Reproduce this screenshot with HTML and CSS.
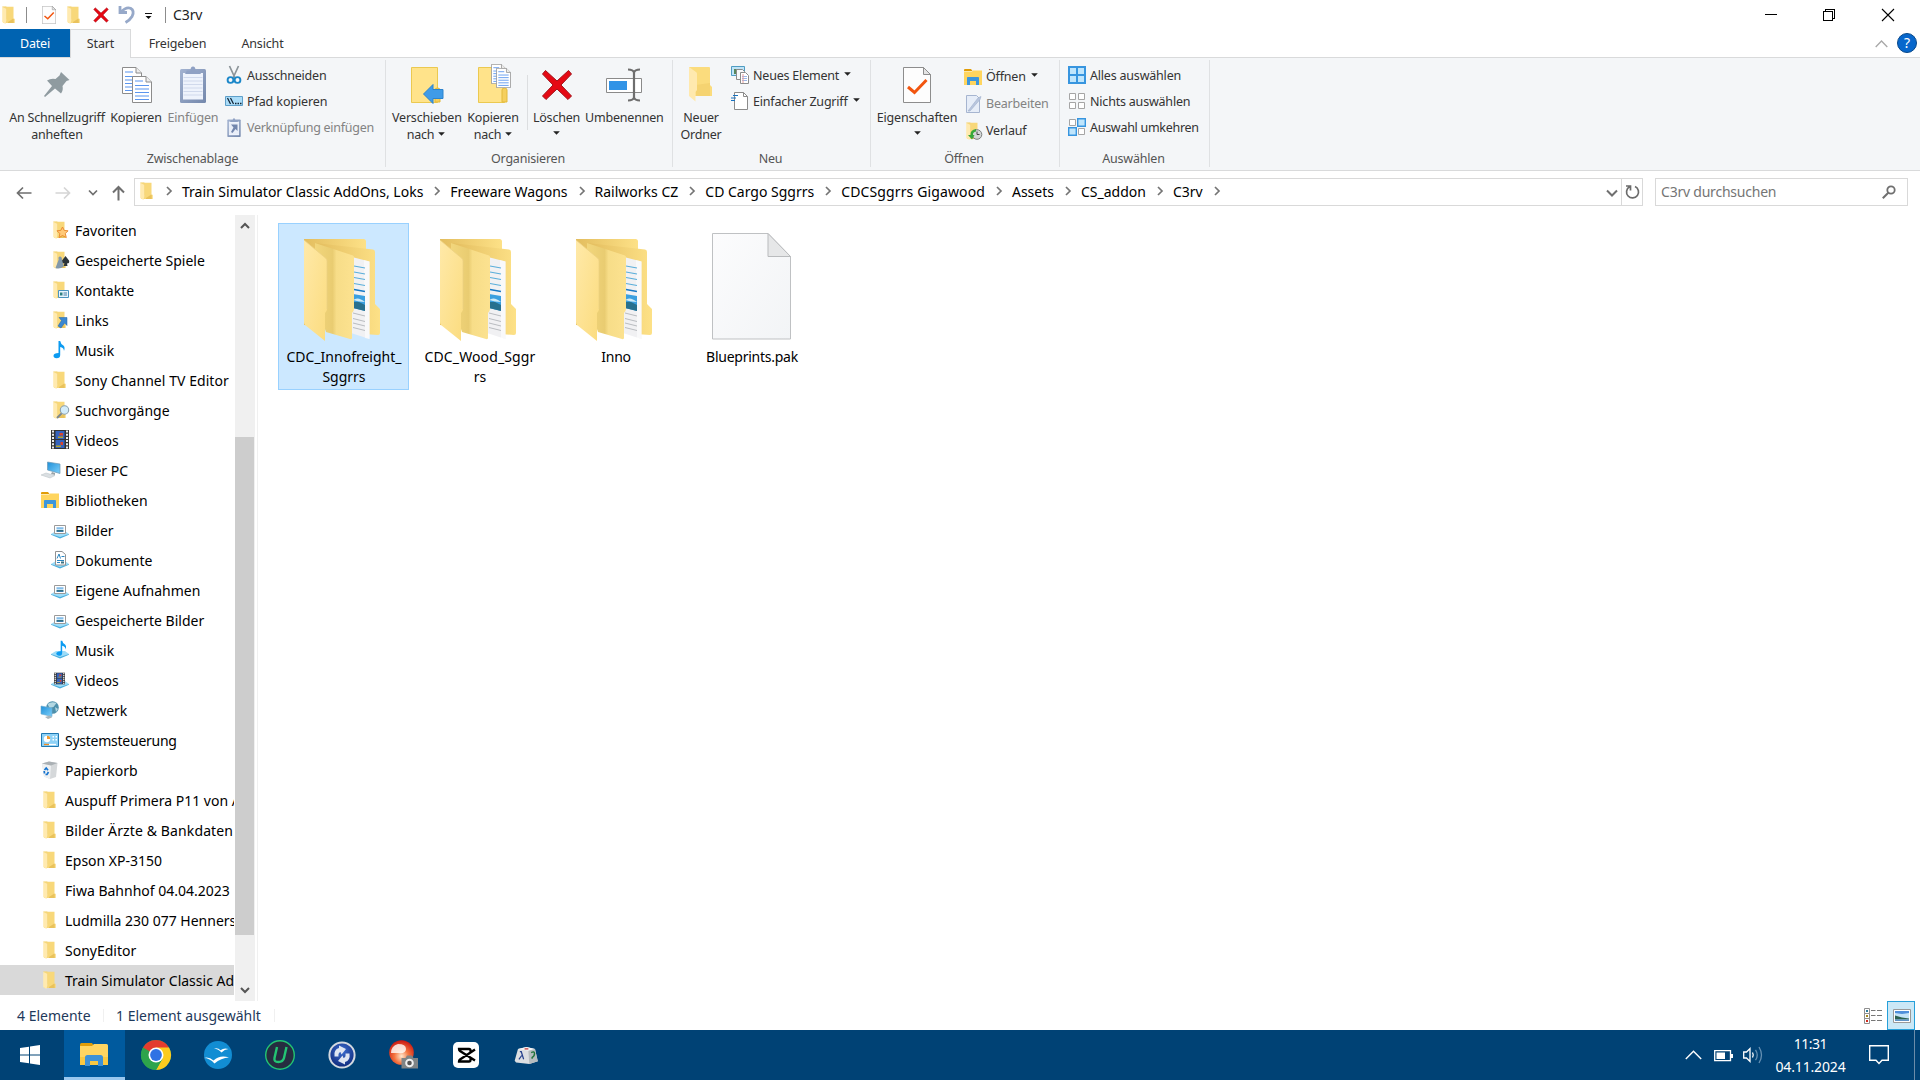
FILE: index.html
```html
<!DOCTYPE html>
<html lang="de">
<head>
<meta charset="utf-8">
<title>C3rv</title>
<link rel="stylesheet" href="styles.css">
</head>
<body>
<svg class="sprite" width="0" height="0" aria-hidden="true">
  <defs>
    <linearGradient id="gFront" x1="0" y1="0" x2="1" y2="1"><stop offset="0" stop-color="#ffe9a8"/><stop offset="1" stop-color="#fbdc7f"/></linearGradient>
    <linearGradient id="gBack" x1="0" y1="0" x2="1" y2="0"><stop offset="0" stop-color="#e3bd5e"/><stop offset="1" stop-color="#fde187"/></linearGradient>
    <linearGradient id="gMid" x1="0" y1="0" x2="1" y2="0"><stop offset="0" stop-color="#f2d67c"/><stop offset=".45" stop-color="#e9cc71"/><stop offset=".55" stop-color="#f7dd88"/><stop offset="1" stop-color="#fce290"/></linearGradient>
    <linearGradient id="gPage" x1="0" y1="0" x2="1" y2="1"><stop offset="0" stop-color="#fcfcfd"/><stop offset="1" stop-color="#f2f4f6"/></linearGradient>
    <linearGradient id="gClip" x1="0" y1="0" x2="1" y2="1"><stop offset="0" stop-color="#a3b3d1"/><stop offset="1" stop-color="#7488ac"/></linearGradient>
    <linearGradient id="gScreen" x1="0" y1="0" x2="1" y2="1"><stop offset="0" stop-color="#1e8fd8"/><stop offset="1" stop-color="#7ed0fb"/></linearGradient>
    <linearGradient id="gPhoto" x1="0" y1="0" x2="0" y2="1"><stop offset="0" stop-color="#3f96dc"/><stop offset=".5" stop-color="#d9effb"/><stop offset=".55" stop-color="#2f6d6b"/><stop offset="1" stop-color="#3c7fc0"/></linearGradient>
    <radialGradient id="gBlue" cx=".5" cy=".35" r=".7"><stop offset="0" stop-color="#3e6fd0"/><stop offset="1" stop-color="#0a2374"/></radialGradient>
    <radialGradient id="gRed" cx=".5" cy=".65" r=".65"><stop offset="0" stop-color="#ffe9cf"/><stop offset=".45" stop-color="#f4743f"/><stop offset="1" stop-color="#c81410"/></radialGradient>
  </defs>
  <symbol id="folder" viewBox="0 0 18 18">
    <path d="M3 .7h10.500v12h1.200V17H3z" fill="#f8d87a"/><path d="M13 12.700h.7V17H8v-1z" fill="#e9c25c"/><path d="M2.200.7L6.500 3v10.500L5.500 18 2.200 16z" fill="#ffeab0"/><path d="M2.200.7h4L6.500 3v10.500" fill="none" stroke="#f3d57c" stroke-width=".6"/>
  </symbol>
  <symbol id="explorer" viewBox="0 0 18 16">
    <path d="M0 1q0-1 1-1h6l1.500 2H0z" fill="#e19c06"/><path d="M0 2.500h8l1-1h9V16H0z" fill="#ffd55e"/><path d="M3 16V8.800q0-.8.800-.8h10.400q.8 0 .8.800V16h-3v-4H6v4z" fill="#3d96dc"/>
  </symbol>
  <symbol id="x" viewBox="0 0 32 32"><path d="M4.500 1.500L16 12 27.500 1.500l3 3.500L20 16l10.500 11-3.500 3.500L16 20 5 30.500 1.500 27 12 16 1.500 5z" fill="#e50914" stroke="#a3121a" stroke-width="1"/></symbol>
  <symbol id="check" viewBox="0 0 28 36"><path d="M.5.500h20l7 7v28H.5z" fill="#fdfdfd" stroke="#8d8d8d"/><path d="M20.500.500v7h7z" fill="#e4e4e4" stroke="#8d8d8d"/><path d="M5 20l6.500 5.500L23.500 13" fill="none" stroke="#f2550f" stroke-width="3"/></symbol>
  <symbol id="page" viewBox="0 0 20 27"><path d="M.5.500h13.500l5.500 5.500v20.500H.5z" fill="#fff" stroke="#8c8c8c"/><path d="M14 .5V6h5.500" fill="#eee" stroke="#8c8c8c"/><path d="M3 5h8M3 9.500h14M3 13h14M3 16.500h14M3 20h14M3 23.500h14" stroke="#5b96ef" stroke-width="1.200"/></symbol>
  <symbol id="chev" viewBox="0 0 8 12"><path d="M2 2l4 4-4 4" fill="none" stroke="#747474" stroke-width="1.700"/></symbol>
  <symbol id="tri" viewBox="0 0 8 4"><path d="M.2 0h7.600L4 4z" fill="#222"/></symbol>
  <symbol id="tray" viewBox="0 0 18 18"><path d="M0 13l5-3h9l4 3-9 4z" fill="#9ddcf8"/><path d="M0 13l9 3 9-3v.8L9 17.500 0 13.800z" fill="#4bafdd"/></symbol>
  <symbol id="libpic" viewBox="0 0 18 18"><use href="#tray"/><path d="M3.500 4.500h11v8h-11z" fill="#fff" stroke="#9a9a9a"/><path d="M5.500 6.500h7v4.500h-7z" fill="url(#gPhoto)"/></symbol>
  <symbol id="note" viewBox="0 0 18 18"><path d="M7.500 0h1.700q.5 3.200 3.200 4.600 2 1.800.6 5.400-.2-3.400-3.800-4v8q0 3.200-3.700 3.200Q2.500 17 2.500 14.700q.2-2.600 5-2.700z" fill="#0c9bf1"/></symbol>
  <symbol id="film" viewBox="0 0 18 19"><path d="M0 0h18v19H0z" fill="#333"/><path d="M4.500 1h9v8h-9zM4.500 10h9v8h-9z" fill="#3563bd"/><path d="M8.500 3h3.500v2.500H8.500zM9.500 12h2.500v3H9.500z" fill="#db432c"/><path d="M7 6.500h5V8H7zM5 15.500h5V17H5z" fill="#b5a327"/><path d="M2 .5v18M16 .5v18" stroke="#eee" stroke-width="2" stroke-dasharray="2 1.200"/></symbol>
  <symbol id="bigfolder" viewBox="0 0 76 103">
    <path d="M0 0h59.500q2.500 0 2.500 2.500V90L0 86z" fill="url(#gBack)"/>
    <path d="M11 4l58 6.500q2 .2 2 2.500v52l5 5v24q0 2-2 2L60 95 30 60z" fill="url(#gBack)"/>
    <path d="M48 18l17.500 4.500V100L47 94z" fill="#f1f1f3"/><path d="M60 21l5.500 1.500V100L61 99z" fill="#fff" opacity=".6"/>
    <path d="M50 27l11 2M50 33l11 2M50 38.500l11 2M50 44.500l11 2" stroke="#5aaeda" stroke-width="1.100"/><path d="M50 50.500l11 2" stroke="#1879c5" stroke-width="1.600"/>
    <path d="M49 55l12 2v15l-12-3z" fill="#3b9fdf"/><path d="M49 63l6 0 6 3v6l-12-3z" fill="#28708e"/><path d="M49 61q5-4 12 2l-6-.5z" fill="#cfeaf7"/>
    <path d="M49 74l12 3M49 79.500l12 3M49 84l12 3M49 88.500l12 3" stroke="#b9bcc0"/>
    <path d="M11 4l38 12.500q1 .5 1 2V70q0 2-2 4V99q0 1.500-2 1L22 93 11 60z" fill="url(#gMid)"/>
    <path d="M0 1l21.500 18q1.500 1.200 1.500 3v48q0 2-2 4v28L1 86q-1-1-1-3z" fill="url(#gFront)"/><path d="M0 1l21.500 18q1.500 1.200 1.500 3v48" fill="none" stroke="#ecd083" stroke-width=".8"/>
  </symbol>
  <symbol id="clip" viewBox="0 0 26 37"><rect y="3" width="26" height="34" rx="1.500" fill="url(#gClip)"/><path d="M3 7h20v26.500H3z" fill="#eef3fc"/><path d="M3.500 11.500h19M3.500 15h19M3.500 18.500h19M3.500 22h19M3.500 25.500h19M3.500 29h19" stroke="#d0d9ec"/><path d="M5 8l2-3.500h3.500a2.500 4 0 0 1 5 0H19L21 8z" fill="#8fa1c4"/></symbol>
</svg>

<div class="window">
  <header class="titlebar">
    <svg class="t-folder" width="18" height="18"><use href="#folder"/></svg>
    <span class="t-sep"></span>
    <svg class="t-check" width="14" height="18"><use href="#check"/></svg>
    <svg class="t-folder2" width="18" height="18"><use href="#folder"/></svg>
    <svg class="t-x" width="16" height="16"><use href="#x"/></svg>
    <svg class="t-undo" width="17" height="19" viewBox="0 0 17 19"><path d="M2 1v6.500H9M3 7Q8 1.500 12.500 3.200 17 5.800 14 11.500 12 15 7.500 17.500" fill="none" stroke="#97a9c9" stroke-width="2.800"/></svg>
    <svg class="t-more" width="7" height="7" viewBox="0 0 7 7"><path d="M0 .5h7" stroke="#111"/><path d="M.5 3h6L3.500 6z" fill="#111"/></svg>
    <span class="t-sep last"></span>
    <span class="title">C3rv</span>
    <svg class="win-buttons" width="130" height="14" viewBox="0 0 130 14"><path d="M0 7.500h12M58.500 4.500h9v9h-9zM60.500 4V2.500h9v9H68" fill="none" stroke="#000" stroke-width="1" shape-rendering="crispEdges"/><path d="M117 2l12 12M129 2l-12 12" stroke="#000" stroke-width="1.100"/></svg>
  </header>

  <nav class="tabs">
    <span class="tab file">Datei</span><span class="tab active">Start</span><span class="tab share">Freigeben</span><span class="tab view">Ansicht</span>
    <svg class="collapse" width="13" height="8" viewBox="0 0 13 8"><path d="M.7 7l5.800-6 5.800 6" fill="none" stroke="#a8a8a8" stroke-width="1.300"/></svg>
    <span class="help">?</span>
  </nav>

  <section class="ribbon">
    <div class="group clipboard">
      <div class="tools">
        <div class="big pin"><span class="ico"><svg width="26" height="27" viewBox="0 0 26 27"><path d="M17 1l8.500 8-3 1-4 5q1 4-1.500 7.500l-6-5L1 26l-1-1 8-10-5-5.500Q7 7 11.500 8l4-3.500z" fill="#8f9ba0"/></svg></span>An Schnellzugriff<br>anheften</div>
        <div class="big copy"><span class="ico"><svg width="30" height="36" viewBox="0 0 30 36"><use href="#page" width="20" height="27"/><use href="#page" x="10" y="9" width="20" height="27"/></svg></span>Kopieren</div>
        <div class="big paste off"><span class="ico"><svg width="26" height="37"><use href="#clip"/></svg></span>Einfügen</div>
        <div class="small-list">
          <div class="small"><svg width="18" height="18" viewBox="0 0 18 18"><path d="M4.500 0l5.500 12M13.500 0L8 12" stroke="#8c9499" stroke-width="1.700"/><circle cx="5.500" cy="14" r="2.900" fill="none" stroke="#1b87c9" stroke-width="1.900"/><circle cx="12.500" cy="14" r="2.900" fill="none" stroke="#1b87c9" stroke-width="1.900"/></svg>Ausschneiden</div>
          <div class="small path"><svg width="18" height="18" viewBox="0 0 18 18"><path d="M.5 4.500h17v9H.5z" fill="#aadcf8" stroke="#5e9fc9"/><path d="M2.500 6l3 6M5.500 6l3 6" stroke="#123" stroke-width="1.200"/><path d="M10 11.500h1.500M12.500 11.500h1.500M15 11.500h1.500" stroke="#123" stroke-width="1.300"/></svg>Pfad kopieren</div>
          <div class="small off link"><svg width="18" height="19" viewBox="0 0 18 19"><use href="#clip" x="2" width="14" height="19"/><path d="M4 5h10v11H4z" fill="#e9eef8"/><path d="M6 6.500h6.500V13l-2-2-3 4-1.500-1 2.500-4.500z" fill="#7286ad"/></svg>Verknüpfung einfügen</div>
        </div>
      </div>
      <div class="group-label">Zwischenablage</div>
    </div>
    <div class="group organize">
      <div class="tools">
        <div class="big move"><span class="ico"><svg width="33" height="37" viewBox="0 0 33 37"><path d="M.5 1.500h26v35H.5z" fill="#ffe38a" stroke="#ebc950"/><path d="M24 36V24q0-2 2.500-2t2.500 2v12z" fill="#f5cf5e" stroke="#e2b93b"/><path d="M12.500 28L22 18.500v5h10v9H22v5z" fill="#3f9be8" stroke="#2c83cd"/></svg></span>Verschieben<br>nach <svg class="tri" width="7" height="4"><use href="#tri"/></svg></div>
        <div class="big copyto"><span class="ico"><svg width="33" height="39" viewBox="0 0 33 39"><path d="M.5 3.500h26v35H.5z" fill="#ffe38a" stroke="#ebc950"/><path d="M24 38V26q0-2 2.500-2t2.500 2v12z" fill="#f5cf5e" stroke="#e2b93b"/><use href="#page" x="13" width="15" height="20"/><use href="#page" x="18" y="4" width="15" height="20"/></svg></span>Kopieren<br>nach <svg class="tri" width="7" height="4"><use href="#tri"/></svg></div>
        <span class="divider"></span>
        <div class="big delete"><span class="ico"><svg width="32" height="32"><use href="#x"/></svg></span>Löschen<br><svg class="tri" width="7" height="4"><use href="#tri"/></svg></div>
        <div class="big rename"><span class="ico"><svg width="36" height="34" viewBox="0 0 36 34"><path d="M.5 10.500h35v14H.5z" fill="#fff" stroke="#8a8a8a"/><path d="M3 13h18v9H3z" fill="#3193e6"/><path d="M22 1.500q5 0 6 3 1-3 6-3M28 4v26M22 32.500q5 0 6-3 1 3 6 3" fill="none" stroke="#6e6e6e" stroke-width="2.200"/></svg></span>Umbenennen</div>
      </div>
      <div class="group-label">Organisieren</div>
    </div>
    <div class="group new">
      <div class="tools">
        <div class="big newfolder"><span class="ico"><svg width="24" height="35" viewBox="0 0 24 35"><path d="M0 0h20q1 0 1 1v17l2 2v9H3z" fill="#fbdc7d"/><path d="M7 29V18l14-2v13z" fill="#efca66" opacity=".5"/><path d="M0 0l7 5q1 .5 1 2v16l-1.500 2V34.500L0 29z" fill="#ffe9ae"/></svg></span>Neuer<br>Ordner</div>
        <div class="small-list">
          <div class="small"><svg width="18" height="18" viewBox="0 0 18 18"><path d="M.5.500h13v9H.5z" fill="#bfe4f8" stroke="#4f9cc2"/><path d="M3 3h6v5H3z" fill="#58875b"/><path d="M5.500 3.500h6l2 2v8h-8z" fill="#f6f8fa" stroke="#8b8b8b"/><path d="M9.500 6.500h5l3 3v8h-8z" fill="#fff" stroke="#8b8b8b"/><path d="M11 10.500h5M11 12.500h5M11 14.500h5" stroke="#9bb7e8"/><path d="M12 8v9" stroke="#e59a9a"/></svg>Neues Element <svg class="tri" width="7" height="4"><use href="#tri"/></svg></div>
          <div class="small"><svg width="18" height="18" viewBox="0 0 18 18"><path d="M3.500.500h9l4 4v13h-13z" fill="#fff" stroke="#8b8b8b"/><path d="M12.500.500v4h4" fill="none" stroke="#8b8b8b"/><path d="M2 3.500h5M0 6h5M0 8.500h4" stroke="#1872c0" stroke-width="1.200"/></svg>Einfacher Zugriff <svg class="tri" width="7" height="4"><use href="#tri"/></svg></div>
        </div>
      </div>
      <div class="group-label">Neu</div>
    </div>
    <div class="group open">
      <div class="tools">
        <div class="big props"><span class="ico"><svg width="28" height="36"><use href="#check"/></svg></span>Eigenschaften<br><svg class="tri" width="7" height="4"><use href="#tri"/></svg></div>
        <div class="small-list">
          <div class="small"><svg width="18" height="16"><use href="#explorer"/></svg>Öffnen <svg class="tri" width="7" height="4"><use href="#tri"/></svg></div>
          <div class="small off"><svg width="18" height="18" viewBox="0 0 18 18"><path d="M2.500.500h10l3 3v14h-13z" fill="#e6edf8" stroke="#a6b5d0"/><path d="M4 16l10-13 3-1.500-1 3L6 16z" fill="#b9c6de" stroke="#9daecb" stroke-width=".6"/></svg>Bearbeiten</div>
          <div class="small"><svg width="18" height="18" viewBox="0 0 18 18"><use href="#folder" width="18" height="18"/><circle cx="13" cy="12.500" r="4.800" fill="#d3d6d6" stroke="#7b7f7f"/><path d="M13 9.500v3h2.500" fill="none" stroke="#444"/><path d="M12 7Q6 8 6.500 13H4l4 4.500 2.500-4.500H9q-.5-3 3-3.500z" fill="#36a83a"/></svg>Verlauf</div>
        </div>
      </div>
      <div class="group-label">Öffnen</div>
    </div>
    <div class="group select">
      <div class="tools">
        <div class="small-list">
          <div class="small"><svg width="18" height="18" viewBox="0 0 18 18"><path d="M0 0h18v18H0z" fill="#3795df"/><path d="M2 2h6v6H2zM10 2h6v6h-6zM2 10h6v6H2zM10 10h6v6h-6z" fill="#bfe5fc"/></svg>Alles auswählen</div>
          <div class="small"><svg width="18" height="18" viewBox="0 0 18 18"><path d="M1.500 1.500h6v6h-6zM10.500 1.500h6v6h-6zM1.500 10.500h6v6h-6zM10.500 10.500h6v6h-6z" fill="#fff" stroke="#a5a5a5"/></svg>Nichts auswählen</div>
          <div class="small link"><svg width="18" height="18" viewBox="0 0 18 18"><path d="M1.500 1.500h6v6h-6zM10.500 10.500h6v6h-6z" fill="#fff" stroke="#a5a5a5"/><path d="M9.700.700h7.600v7.600H9.700zM.7 9.700h7.600v7.600H.7z" fill="#bfe5fc" stroke="#3795df" stroke-width="1.400"/></svg>Auswahl umkehren</div>
        </div>
      </div>
      <div class="group-label">Auswählen</div>
    </div>
  </section>

  <section class="address-row">
    <svg class="nav-arrows" width="112" height="20" viewBox="0 0 112 20"><path d="M15.500 10H1.500M7 4.500L1.500 10 7 15.500" fill="none" stroke="#6f6f6f" stroke-width="1.700"/><path d="M39.500 10h14M48 4.500l5.500 5.500L48 15.500" fill="none" stroke="#d5d5d5" stroke-width="1.700"/><path d="M73 7.500l4 4 4-4" fill="none" stroke="#6f6f6f" stroke-width="1.700"/><path d="M102.500 17.500V4M97 9.500L102.500 4l5.500 5.500" fill="none" stroke="#6f6f6f" stroke-width="2"/></svg>
    <div class="address">
      <svg class="a-folder" width="18" height="18"><use href="#folder"/></svg>
      <svg class="chev" width="8" height="12"><use href="#chev"/></svg><span>Train Simulator Classic AddOns, Loks</span>
      <svg class="chev" width="8" height="12"><use href="#chev"/></svg><span>Freeware Wagons</span>
      <svg class="chev" width="8" height="12"><use href="#chev"/></svg><span>Railworks CZ</span>
      <svg class="chev" width="8" height="12"><use href="#chev"/></svg><span>CD Cargo Sggrrs</span>
      <svg class="chev" width="8" height="12"><use href="#chev"/></svg><span class="wide">CDCSggrrs Gigawood</span>
      <svg class="chev" width="8" height="12"><use href="#chev"/></svg><span>Assets</span>
      <svg class="chev" width="8" height="12"><use href="#chev"/></svg><span>CS_addon</span>
      <svg class="chev" width="8" height="12"><use href="#chev"/></svg><span>C3rv</span>
      <svg class="chev" width="8" height="12"><use href="#chev"/></svg>
      <svg class="drop" width="12" height="8" viewBox="0 0 12 8"><path d="M1 1.500l5 5 5-5" fill="none" stroke="#6f6f6f" stroke-width="2"/></svg>
      <span class="refresh"><svg width="15" height="16" viewBox="0 0 15 16"><path d="M10 2.500A6 6 0 1 1 4.500 2.800M1 2h4.500v4.500" fill="none" stroke="#6b6b6b" stroke-width="1.700"/></svg></span>
    </div>
    <div class="search"><span>C3rv durchsuchen</span><svg width="14" height="14" viewBox="0 0 14 14"><circle cx="9" cy="5" r="3.700" fill="none" stroke="#6f6f6f" stroke-width="1.800"/><path d="M6.500 7.500L.8 13.200" stroke="#6f6f6f" stroke-width="2"/></svg></div>
  </section>

  <main class="content">
    <aside class="tree">
      <div class="row sub"><svg width="18" height="18" viewBox="0 0 18 18"><use href="#folder"/><path d="M11.500 6l1.700 3.400 3.900.4-2.800 2.700 1 4.100-3.800-2.100-3.500 2.100.9-4.100-3-2.700 3.900-.4z" fill="#ffc978" stroke="#e8862a" stroke-width=".9"/></svg>Favoriten</div>
      <div class="row sub"><svg width="18" height="18" viewBox="0 0 18 18"><use href="#folder"/><path d="M14.500 5l3.500 4.500q1 3-2 3l.5 2.500h-4l1-2.500q-3.500 0-2.500-3z" fill="#2c3439"/><path d="M9 5.500a2 2 0 0 1 1.800 2.700l2 7.300q-4 3-8.300 1.500l3.200-8.500q-.8-3 1.300-3z" fill="#8298aa"/></svg>Gespeicherte Spiele</div>
      <div class="row sub"><svg width="18" height="18" viewBox="0 0 18 18"><use href="#folder"/><path d="M7.500 9.500h10v7h-10z" fill="#e7f5fd" stroke="#4a93bf"/><path d="M9 11.500h2.500v3H9z" fill="#2e7f80"/><path d="M12.500 12h3.500M12.500 14h3.500" stroke="#487ca5"/></svg>Kontakte</div>
      <div class="row sub"><svg width="18" height="18" viewBox="0 0 18 18"><use href="#folder"/><path d="M8 6.500h8v8l-2.500-2.500-3.500 5-3-2 3.500-5.500z" fill="#3b87d0" stroke="#1d62a8" stroke-width=".5"/></svg>Links</div>
      <div class="row sub"><svg width="18" height="18"><use href="#note"/></svg>Musik</div>
      <div class="row sub"><svg width="18" height="18"><use href="#folder"/></svg><span class="ext">Sony Channel TV Editor</span></div>
      <div class="row sub"><svg width="18" height="18" viewBox="0 0 18 18"><use href="#folder"/><path d="M11 12l-5 5" stroke="#7f888d" stroke-width="2"/><circle cx="13.500" cy="9" r="4.200" fill="#d3ecfa" stroke="#8ba0ad" stroke-width="1.100"/></svg>Suchvorgänge</div>
      <div class="row sub"><svg width="18" height="19"><use href="#film"/></svg>Videos</div>
      <div class="row"><svg width="20" height="18" viewBox="0 0 20 18"><path d="M6.500 1l12.500 2v9.500L6.500 9z" fill="url(#gScreen)" stroke="#6b98b5" stroke-width=".7"/><path d="M11 11l3 1v2l-4-1z" fill="#9aa3a8"/><path d="M0 14l5-2 9 2.500-5 2.500z" fill="#dadfe2" stroke="#b9c0c4" stroke-width=".5"/></svg>Dieser PC</div>
      <div class="row"><svg width="18" height="16"><use href="#explorer"/></svg>Bibliotheken</div>
      <div class="row sub"><svg width="18" height="18"><use href="#libpic"/></svg>Bilder</div>
      <div class="row sub"><svg width="18" height="18" viewBox="0 0 18 18"><use href="#tray"/><path d="M4.500.500h6.500l3.500 3V14H4.500z" fill="#fff" stroke="#929292"/><path d="M6 7.500L8 3l1.500 4.500M10.500 5.500h3M6 9.500h7M6 11.500h3" stroke="#2b86c1" fill="none"/><path d="M10 10.500h3v2h-3z" fill="#397183"/></svg>Dokumente</div>
      <div class="row sub"><svg width="18" height="18"><use href="#libpic"/></svg>Eigene Aufnahmen</div>
      <div class="row sub"><svg width="18" height="18"><use href="#libpic"/></svg>Gespeicherte Bilder</div>
      <div class="row sub"><svg width="18" height="18" viewBox="0 0 18 18"><use href="#tray"/><use href="#note" x="3" y="-.5" width="16" height="16"/></svg>Musik</div>
      <div class="row sub"><svg width="18" height="18" viewBox="0 0 18 18"><use href="#tray"/><use href="#film" x="3" y="0" width="11" height="15"/></svg>Videos</div>
      <div class="row"><svg width="18" height="18" viewBox="0 0 18 18"><circle cx="11.500" cy="6.500" r="6.300" fill="#4d8fab"/><path d="M6.500 3q4-3 9-1l-3 4-4 1zM14 6l3 2-2 3z" fill="#b3d7e2"/><path d="M0 5l11 2v8.500L0 13z" fill="url(#gScreen)" stroke="#6ba9cc" stroke-width=".6"/><path d="M4 16l5-1.500 2 2-4 1.500z" fill="#aab5bb"/></svg>Netzwerk</div>
      <div class="row"><svg width="18" height="14" viewBox="0 0 18 14"><path d="M.5.500h17v13H.5z" fill="#8ed2f7" stroke="#1f78b2"/><circle cx="6" cy="6" r="3.200" fill="#fff"/><path d="M6 6V2.800A3.200 3.200 0 0 1 9.200 6z" fill="#f29a2e"/><path d="M11.500 3h1.500v1.500h-1.500zM14.500 3H16v1.500h-1.500zM11.500 6h1.500v1.500h-1.500zM14.500 6H16v1.500h-1.500z" fill="#fff"/><path d="M3 11.500h5" stroke="#f08b22" stroke-width="1.300"/><path d="M8 11.500h7" stroke="#fff" stroke-width="1.300"/></svg><span class="tight">Systemsteuerung</span></div>
      <div class="row"><svg width="18" height="18" viewBox="0 0 18 18"><path d="M1 2.500L8 .5l8.500 1.500-1.500 14-6 2-6-2.500z" fill="#d5d8da"/><path d="M1 2.500l9 2L9 18l-6-2.500z" fill="#eff1f2"/><path d="M1 2.500L8 .5l8.500 1.500-6.500 2.500z" fill="#aab0b4"/><path d="M3.500 9l1.700-2 1.800 2.200M7.500 11L6 13.500H4.500M3.500 12.500l-.3-2.500" fill="none" stroke="#1674cf" stroke-width="1.700"/></svg>Papierkorb</div>
      <div class="row"><svg width="18" height="18"><use href="#folder"/></svg>Auspuff Primera P11 von Auto</div>
      <div class="row"><svg width="18" height="18"><use href="#folder"/></svg><span class="wide">Bilder Ärzte &amp; Bankdaten</span></div>
      <div class="row"><svg width="18" height="18"><use href="#folder"/></svg>Epson XP-3150</div>
      <div class="row"><svg width="18" height="18"><use href="#folder"/></svg>Fiwa Bahnhof 04.04.2023</div>
      <div class="row"><svg width="18" height="18"><use href="#folder"/></svg>Ludmilla 230 077 Hennersdorf</div>
      <div class="row"><svg width="18" height="18"><use href="#folder"/></svg>SonyEditor</div>
      <div class="row selected"><svg width="18" height="18"><use href="#folder"/></svg>Train Simulator Classic AddOns</div>
    </aside>
    <div class="scrollbar">
      <svg width="10" height="7" viewBox="0 0 10 7"><path d="M1 6l4-4 4 4" fill="none" stroke="#555" stroke-width="2"/></svg>
      <div class="thumb"></div>
      <svg width="10" height="7" viewBox="0 0 10 7"><path d="M1 1l4 4 4-4" fill="none" stroke="#555" stroke-width="2"/></svg>
    </div>
    <div class="files">
      <div class="tile selected"><svg width="76" height="103"><use href="#bigfolder"/></svg><span>CDC_Innofreight_<br>Sggrrs</span></div>
      <div class="tile"><svg width="76" height="103"><use href="#bigfolder"/></svg><span class="wide">CDC_Wood_Sggr<br>rs</span></div>
      <div class="tile"><svg width="76" height="103"><use href="#bigfolder"/></svg><span class="tight">Inno</span></div>
      <div class="tile doc"><svg width="79" height="107" viewBox="0 0 79 107"><path d="M.5.500h55.500l22.500 23v82.500H.5z" fill="url(#gPage)" stroke="#bfc1c3"/><path d="M56 .5v23h22.500z" fill="#e6e7e8" stroke="#b9bbbd"/></svg><span class="tight">Blueprints.pak</span></div>
    </div>
  </main>

  <footer class="status">
    <span class="count">4 Elemente</span><span class="picked">1 Element ausgewählt</span>
    <span class="view-details"><svg width="18" height="16" viewBox="0 0 18 16"><path d="M.5.500h5v5h-5zM.5 5.500h5v5h-5zM.5 10.500h5v5h-5z" fill="#fff" stroke="#8f8f8f"/><path d="M2 2h2v2H2z" fill="#2c7b9c"/><path d="M2 7h2v2H2z" fill="#a48a20"/><path d="M2 12h2v2H2z" fill="#d02a1c"/><path d="M7 2.500h4.500M13 2.500h5M7 7.500h4.500M13 7.500h5M7 12.500h4.500M13 12.500h5" stroke="#777"/></svg></span>
    <span class="view-icons"><svg width="18" height="14" viewBox="0 0 18 14"><path d="M.5.500h17v13H.5z" fill="#fff" stroke="#999"/><path d="M2 2h14v10H2z" fill="#c4e3f8"/><path d="M2 2h14v2L9 5 2 4z" fill="#4f8fdb"/><path d="M2 6.500l7 2 7 1v1H2z" fill="#2c6251"/><path d="M2 10.500h14V12H2z" fill="#5f93c6"/></svg></span>
  </footer>

  <footer class="taskbar">
    <span class="task start"><svg width="20" height="20" viewBox="0 0 20 20"><path d="M0 3l9-1.300V9.500H0zM10 1.500L20 0v9.500H10zM0 10.500h9v7.800L0 17zM10 10.500h10V20l-10-1.500z" fill="#fff"/></svg></span>
    <span class="task current"><svg width="28" height="23" viewBox="0 0 28 23"><path d="M0 1.500Q0 0 1.500 0H12l2 3H0z" fill="#df9d08"/><path d="M0 3h12l2-2h12.500Q28 1 28 2.500V22H0z" fill="#ffd561"/><path d="M0 14h28v8H0z" fill="#f9c942"/><path d="M5 23V14.500Q5 12 7.500 12h13q2.500 0 2.500 2.500V23h-5v-5h-8v5z" fill="#3d92d8"/></svg></span>
    <span class="task"><svg width="30" height="30" viewBox="0 0 30 30"><circle cx="15" cy="15" r="15" fill="#30a14e"/><path d="M15 15L2 7.500A15 15 0 0 1 28 7.500z" fill="#e33c2e"/><path d="M15 7.500h13A15 15 0 0 1 15 30l6.500-11.500z" fill="#fccb1f"/><path d="M2 7.500L8.500 18.700 15 22 21.500 18.700 15 30A15 15 0 0 1 2 7.500z" fill="#2da44c"/><circle cx="15" cy="15" r="7.500" fill="#fff"/><circle cx="15" cy="15" r="5.900" fill="#2f72e4"/></svg></span>
    <span class="task"><svg width="28" height="28" viewBox="0 0 28 28"><circle cx="14" cy="14" r="14" fill="#128dd3"/><path d="M10 7.500q4-1.200 6.500 1.800 3.500-3 8-1.300-4 .2-7 3.500-3-3.500-7.500-4zM0 17q5-1.500 9.500 2.500 6.500-6 15.500-3-8 .5-14.500 6-5-5.500-10.500-5.500z" fill="#fff"/></svg></span>
    <span class="task"><svg width="30" height="30" viewBox="0 0 30 30"><circle cx="15" cy="15" r="14.300" fill="#262d40" stroke="#23c573" stroke-width="1.400"/><path d="M12 7L9.500 18q-.8 4 3.800 4 4.700 0 5.700-4L21.500 7" fill="none" stroke="#23c573" stroke-width="2.400"/></svg></span>
    <span class="task sync"><svg width="28" height="28" viewBox="0 0 28 28"><circle cx="14" cy="14" r="12.600" fill="url(#gBlue)" stroke="#d3d9e0" stroke-width="2"/><path d="M6.500 15.500Q5.500 8.500 11 7V4.500l7 3.500-4.500 5.500-1-2.500q-2.500.5-2 4.500zM21.500 12.500q1 7-4.500 8.500v2.500L10 20l4.500-5.500 1 2.500q2.500-.5 2-4.500z" fill="#dfe6f2"/></svg></span>
    <span class="task shot"><svg width="29" height="29" viewBox="0 0 29 29"><circle cx="12.500" cy="12.500" r="12.300" fill="url(#gRed)"/><path d="M2 13Q2 6 9 4q8 0 8 5T9 13z" fill="#fff" opacity=".8"/><path d="M12.500 18h4l1.500-2.500h5l1.500 2.500h4.500v10.500H12.500z" fill="#7f8486"/><circle cx="20.500" cy="23" r="4.300" fill="#f0f0f0"/><circle cx="20.500" cy="23" r="2.300" fill="#555"/></svg></span>
    <span class="task"><svg width="26" height="26" viewBox="0 0 26 26"><rect width="26" height="26" rx="5" fill="#fff"/><path d="M22 7.500L7 17.500q-1 .7-1 2h10q1.500 0 1.500-1.500v-1.500M22 18.500L7 9q-1-.7-1-2h10q1.500 0 1.500 1.500V10" fill="none" stroke="#000" stroke-width="2.300"/></svg></span>
    <span class="task dice"><svg width="24" height="17" viewBox="0 0 25 18"><path d="M4 2l9-2 9 2 3 13-9 3-14-1.500-1.500-2z" fill="#dcdfe2"/><path d="M4 2l9-2 9 2-7 2z" fill="#f5f5f5"/><path d="M15 4l7-2 3 13-9 3z" fill="#b6bcbf"/><path d="M6 5h1.500l2.500 8M8 9l-3 4" fill="none" stroke="#25418d" stroke-width="1.300"/><path d="M18 6q3.500-2 3.500 1t-2.500 4v1.500" fill="none" stroke="#237339" stroke-width="1.500"/><path d="M11 2h4" stroke="#c34040" stroke-width="1.400"/></svg></span>
    <div class="systray">
      <svg class="s-up" width="17" height="10" viewBox="0 0 17 10"><path d="M.8 9l7.700-7.700L16.200 9" fill="none" stroke="#fff" stroke-width="1.400"/></svg>
      <svg class="s-bat" width="19" height="12" viewBox="0 0 19 12"><path d="M.7.700h15.800v10H.7z" fill="none" stroke="#fff" stroke-width="1.300"/><path d="M2.500 2.500h8.500V9H2.500zM17 4h2v4h-2z" fill="#fff"/></svg>
      <svg class="s-vol" width="20" height="18" viewBox="0 0 20 18"><path d="M.7 6h2.800L7 2.500v13L3.500 12H.7z" fill="none" stroke="#fff" stroke-width="1.300"/><path d="M9.500 6.500q1.500 2.500 0 5" fill="none" stroke="#fff" stroke-width="1.300"/><path d="M12.500 3.800q3.500 5.200 0 10.400M16 1q5 8 0 16" fill="none" stroke="#6590b2" stroke-width="1.300"/></svg>
      <div class="clock"><span class="time">11:31</span><span>04.11.2024</span></div>
      <svg class="s-note" width="20" height="20" viewBox="0 0 20 20"><path d="M.7.700h18.600v14.600H13L10 18.500 7 15.300H.7z" fill="none" stroke="#fff" stroke-width="1.400"/></svg>
      <span class="peek"></span>
    </div>
  </footer>
</div>
</body>
</html>
```
FILE: styles.css
```css
* { box-sizing: border-box; }
body {
  margin: 0;
  width: 1920px;
  height: 1080px;
  overflow: hidden;
  background: #fff;
  color: #000;
  font: 14px/20px "Noto Sans", "Open Sans", sans-serif;
}
svg { display: block; flex: none; overflow: visible; }
.sprite { position: absolute; }
.window { display: flex; flex-direction: column; height: 1080px; }

/* title bar */
.titlebar { display: flex; align-items: center; height: 29px; }
.t-folder { margin-left: 0; }
.t-sep { width: 1px; height: 16px; margin-left: 8px; background: #8c8c8c; }
.t-check { margin-left: 15px; }
.t-folder2 { margin-left: 9px; }
.t-x { margin-left: 10px; }
.t-undo { margin-left: 9px; }
.t-more { margin-left: 10px; margin-top: 3px; }
.t-sep.last { margin-left: 13px; }
.title { margin-left: 7px; color: #222; letter-spacing: -0.1px; }
.win-buttons { margin-left: auto; margin-right: 25px; margin-bottom: 2px; }

/* tabs */
.tabs {
  display: flex;
  height: 29px;
  border-bottom: 1px solid #d9dadb;
  font-size: 12.5px;
  letter-spacing: -0.15px;
  line-height: 29px;
  color: #333;
}
.tab { text-align: center; }
.file { width: 70px; height: 28px; background: #0063b1; color: #fff; }
.active { width: 61px; height: 29px; border: 1px solid #d9dadb; border-bottom: 0; background: #f4f6f8; line-height: 27px; }
.share { width: 93px; }
.view { width: 77px; }
.collapse { margin: 11px 9px 0 auto; }
.help {
  width: 20px; height: 20px; margin: 4px 3px 0 0;
  border: 1px solid #07488a; border-radius: 50%;
  background: #0767cc; color: #fff;
  font-size: 14px; line-height: 18px; text-align: center;
}

/* ribbon */
.ribbon {
  display: flex;
  height: 113px;
  padding-top: 2px;
  border-bottom: 1px solid #d9dadb;
  background: #f4f6f8;
  color: #333;
  font-size: 12.5px;
  letter-spacing: -0.2px;
  line-height: 17px;
  white-space: nowrap;
}
.group { display: flex; flex-direction: column; height: 107px; border-right: 1px solid #dfe1e3; }
.clipboard { width: 386px; }
.organize { width: 287px; }
.new { width: 198px; }
.open { width: 189px; }
.select { width: 150px; }
.tools { display: flex; height: 92px; }
.group-label { padding-right: 2px; text-align: center; color: #555; }
.clipboard .group-label { padding-right: 0; }
.big { text-align: center; }
.big .ico { display: flex; align-items: center; justify-content: center; height: 49px; }
.big .tri { display: inline-block; vertical-align: 3px; margin-left: 1px; }
.big.delete .tri, .big.props .tri { margin-left: 0; vertical-align: 4px; }
.off { color: #838383; }
.pin { width: 106px; margin-left: 4px; }
.copy { width: 52px; }
.copy .ico { padding-left: 2px; }
.paste { width: 62px; }
.move { width: 68px; margin-left: 6px; }
.move .ico { padding-left: 3px; }
.copyto { width: 66px; }
.copyto .ico { padding: 0 0 3px 3px; }
.divider { width: 1px; height: 55px; margin: 15px 0 0 1px; background: #dcdee0; }
.delete { width: 57px; }
.rename { width: 78px; }
.newfolder { width: 56px; }
.props { width: 92px; }
.small-list { display: flex; flex-direction: column; padding-top: 2px; }
.small { display: flex; align-items: center; gap: 4px; height: 26px; }
.small .tri { margin-left: 1px; margin-bottom: 3px; }
.path { letter-spacing: -0.1px; }
.link { letter-spacing: -0.28px; }
.clipboard .small-list { margin-left: 1px; }
.new .small-list { margin-left: 2px; }
.open .small-list { margin-left: 1px; padding-top: 3px; }
.open .small { height: 27px; }
.select .small-list { margin-left: 8px; }

/* address bar */
.address-row { display: flex; align-items: flex-start; height: 44px; padding: 7px 12px 0 16px; }
.nav-arrows { margin-top: 5px; }
.address {
  display: flex;
  align-items: center;
  width: 1509px;
  height: 28px;
  margin-left: 6px;
  border: 1px solid #d9d9d9;
  white-space: nowrap;
}
.address > span:not(.refresh) { padding-bottom: 1px; }
.a-folder { margin: 0 8px 2px 3px; }
.chev { margin: 0 9px 2px 10px; }
.a-folder + .chev { margin-left: 1px; }
.wide { letter-spacing: 0.12px; }
.ext { letter-spacing: 0.06px; }
.tight { letter-spacing: -0.25px; }
.drop { margin-left: auto; margin-right: 3px; margin-top: 1px; }
.refresh { display: flex; align-items: center; justify-content: center; width: 21px; height: 26px; border-left: 1px solid #d9d9d9; }
.search {
  display: flex;
  align-items: center;
  justify-content: space-between;
  width: 253px;
  height: 28px;
  margin-left: auto;
  padding: 0 11px 0 5px;
  border: 1px solid #d9d9d9;
  color: #757575;
  letter-spacing: -0.22px;
}

/* content */
.content { display: flex; height: 786px; }
.tree { width: 234px; height: 780px; overflow: hidden; }
.row { display: flex; align-items: center; gap: 6px; height: 30px; padding: 2px 0 0 41px; white-space: nowrap; }
.row svg { margin-top: -3px; }
.row svg[width="20"] { margin-right: -2px; }
.row.sub { padding-left: 51px; }
.row.selected { background: #d9d9d9; }
.scrollbar { display: flex; flex-direction: column; align-items: center; width: 20px; margin-left: 1px; padding: 7px 1px 7px 0; background: #f0f0f0; }
.thumb { width: 19px; height: 498px; margin: 208px 0 auto; background: #cdcdcd; }
.files { display: flex; flex: 1; gap: 5px; margin-left: 2px; padding: 8px 0 0 20px; border-left: 1px solid #f0f0f0; }
.tile { display: flex; flex-direction: column; align-items: center; width: 131px; height: 167px; padding-top: 15px; border: 1px solid transparent; text-align: center; }
.tile span { margin-top: 5px; padding-left: 1px; }
.tile.selected { border-color: #99d1ff; background: #cce8ff; }
.tile.doc { padding-top: 9px; }
.tile.doc span { margin-top: 7px; }
.tile svg { margin-right: 3px; }
.tile.doc svg { margin-right: 0; }

/* status bar */
.status { display: flex; align-items: center; height: 29px; color: #1e395b; }
.count { width: 87px; margin-left: 17px; border-right: 1px solid #f0f0f0; line-height: 13px; }
.picked { margin-left: 12px; padding-right: 13px; border-right: 1px solid #f0f0f0; line-height: 13px; }
.view-details { margin-left: auto; margin-right: 5px; }
.view-icons { display: flex; align-items: center; justify-content: center; width: 28px; height: 29px; padding-left: 1px; margin-right: 5px; border: 1px solid #26a0da; background: #cbe8f6; }

/* taskbar */
.taskbar { display: flex; height: 50px; background: #004275; color: #fff; }
.task { display: flex; align-items: center; justify-content: center; width: 62px; }
.start { width: 60px; margin-right: 4px; }
.current { width: 61px; background: #005a9e; border-bottom: 3px solid #99c7ee; padding: 2px 2px 0 0; }
.sync { padding-right: 1px; }
.shot { padding: 0 2px 1px 0; }
.dice { padding-right: 4px; }
.systray { display: flex; align-items: center; margin-left: auto; }
.s-bat { margin-left: 12px; margin-top: 1px; }
.s-vol { margin-left: 10px; }
.clock { display: flex; flex-direction: column; width: 72px; margin-left: 12px; padding-right: 1px; text-align: center; line-height: 23px; letter-spacing: -0.15px; }
.time { letter-spacing: -0.5px; }
.s-note { margin-left: 22px; margin-right: 25px; }
.peek { width: 6px; height: 50px; border-left: 1px solid #6b8ca9; }
```
